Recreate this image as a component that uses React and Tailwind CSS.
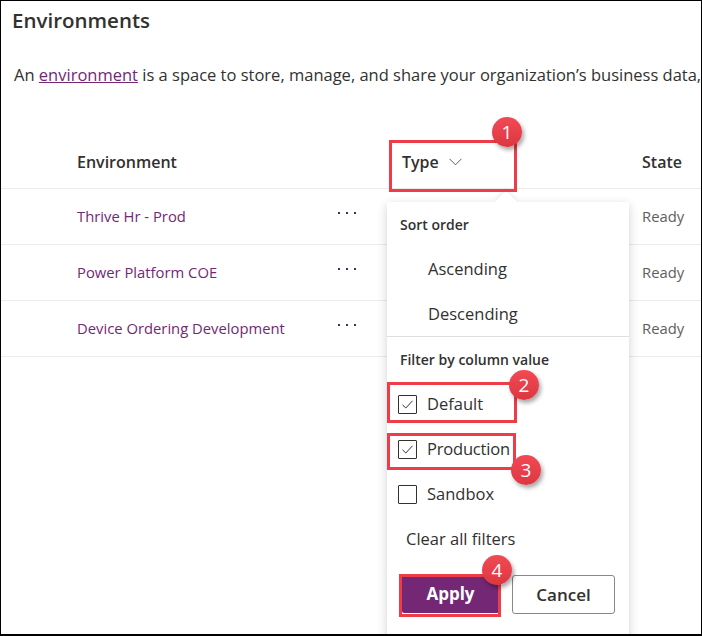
import React from 'react';

const rows = [
  { name: 'Thrive Hr - Prod', state: 'Ready' },
  { name: 'Power Platform COE', state: 'Ready' },
  { name: 'Device Ordering Development', state: 'Ready' },
];

// Red numbered marker used in the annotated screenshot
const Badge = ({ n, className }) => (
  <div
    className={`absolute w-[30px] h-[30px] rounded-full bg-gradient-to-b from-[#f24a55] to-[#dc3641] text-white flex items-center justify-center text-[19px] leading-none shadow-[2px_3px_4px_rgba(0,0,0,0.35)] ${className}`}
  >
    {n}
  </div>
);

const Checkbox = ({ checked }) => (
  <span className="w-[19px] h-[19px] border border-[#323130] rounded-[1px] flex items-center justify-center bg-white">
    {checked && (
      <svg width="13" height="13" viewBox="0 0 13 13" fill="none">
        <path d="M1.5 6.8 L4.8 10 L11.5 2.8" stroke="#323130" strokeWidth="1" />
      </svg>
    )}
  </span>
);

const Dots = () => (
  <div className="flex gap-[6px] pl-[13px] pb-[8px]">
    <span className="w-[2px] h-[2px] bg-[#4b2a63]" />
    <span className="w-[2px] h-[2px] bg-[#4b2a63]" />
    <span className="w-[2px] h-[2px] bg-[#4b2a63]" />
  </div>
);

const FilterPanel = () => (
  <div className="absolute left-[386px] top-[201px] w-[242px] h-[460px] bg-white shadow-[0_3px_10px_rgba(0,0,0,0.18)] text-[#323130]">
    {/* beak */}
    <div className="absolute left-[111px] top-[-8px] w-[16px] h-[16px] bg-white rotate-45 shadow-[-2px_-2px_4px_rgba(0,0,0,0.06)]" />
    <div className="relative">
      <div className="h-[44px] flex items-center pl-[13px] text-[14px] font-semibold">Sort order</div>
      <div className="h-[46px] flex items-center pl-[41px] text-[16.5px]">Ascending</div>
      <div className="h-[45px] flex items-center pl-[41px] text-[16.5px] border-b border-[#e1dfdd]">Descending</div>
      <div className="h-[45px] flex items-center pl-[13px] text-[14px] font-semibold">Filter by column value</div>
      <div className="h-[45px] flex items-center gap-[10px] pl-[11px] text-[16.5px]">
        <Checkbox checked />
        <span>Default</span>
      </div>
      <div className="h-[45px] flex items-center gap-[10px] pl-[11px] text-[16.5px]">
        <Checkbox checked />
        <span className="tracking-[-0.2px]">Production</span>
      </div>
      <div className="h-[45px] flex items-center gap-[10px] pl-[11px] text-[16.5px]">
        <Checkbox />
        <span>Sandbox</span>
      </div>
      <div className="h-[45px] flex items-center pl-[19px] text-[16.5px]">Clear all filters</div>
      <div className="flex gap-[13px] pl-[15px] pt-[13px]">
        <button className="w-[97px] h-[38px] bg-[#742774] text-white text-[17px] font-bold rounded-[2px]">Apply</button>
        <button className="w-[103px] h-[39px] bg-white border border-[#8a8886] text-[17px] font-semibold rounded-[3px]">Cancel</button>
      </div>
    </div>
  </div>
);

export default function App() {
  return (
    <div className="relative w-[702px] h-[636px] overflow-hidden bg-white border-t border-l border-r border-b-2 border-black font-['Open_Sans','Noto_Sans',sans-serif] text-[#323130]">
      <h1 className="pl-[11px] pt-[3px] h-[40px] text-[20.5px] font-semibold leading-[32px]">Environments</h1>
      <p className="pl-[13px] pt-[22px] whitespace-nowrap text-[16.5px] leading-[24px]">
        An <a className="text-[#742774] underline">environment</a> is a space to store, manage, and share your organization’s business data,
      </p>

      {/* table */}
      <div className="mt-[49px]">
        <div className="grid grid-cols-[76px_248px_77px_240px_1fr] h-[53px] items-center border-b border-[#edebe9] text-[16px] font-semibold">
          <div />
          <div>Environment</div>
          <div />
          <div className="flex items-center gap-[10px]">
            Type
            <svg width="13" height="8" viewBox="0 0 13 8" fill="none">
              <path d="M0.5 0.8 L6.5 6.8 L12.5 0.8" stroke="#605e5c" strokeWidth="1" />
            </svg>
          </div>
          <div>State</div>
        </div>
        {rows.map((r) => (
          <div
            key={r.name}
            className="grid grid-cols-[76px_248px_77px_240px_1fr] h-[56px] items-center border-b border-[#edebe9] text-[14.8px]"
          >
            <div />
            <div className="text-[#742774]">{r.name}</div>
            <Dots />
            <div />
            <div className="text-[#605e5c]">{r.state}</div>
          </div>
        ))}
      </div>

      <FilterPanel />

      {/* annotation boxes */}
      <div className="absolute left-[388px] top-[139px] w-[128px] h-[52px] border-[3px] border-[#ee3d48]" />
      <div className="absolute left-[386px] top-[381px] w-[130px] h-[41px] border-[3px] border-[#ee3d48]" />
      <div className="absolute left-[386px] top-[432px] w-[129px] h-[37px] border-[3px] border-[#ee3d48]" />
      <div className="absolute left-[398px] top-[573px] w-[102px] h-[43px] border-[3px] border-[#ee3d48]" />

      <Badge n="1" className="left-[491px] top-[116px]" />
      <Badge n="2" className="left-[508px] top-[369px]" />
      <Badge n="3" className="left-[510px] top-[454px]" />
      <Badge n="4" className="left-[481px] top-[554px]" />
    </div>
  );
}
